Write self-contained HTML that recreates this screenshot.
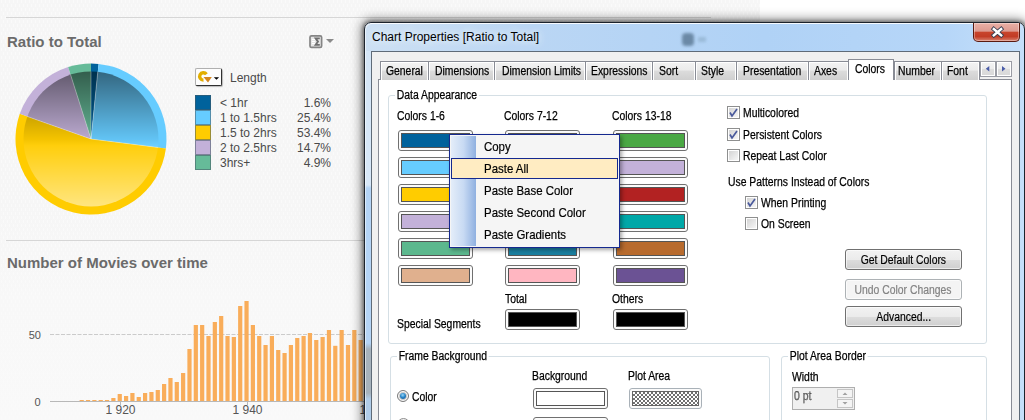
<!DOCTYPE html>
<html><head><meta charset="utf-8">
<style>
*{margin:0;padding:0;box-sizing:border-box}
html,body{width:1025px;height:420px;overflow:hidden;background:#fff;font-family:"Liberation Sans",sans-serif}
.a{position:absolute}
.sheet{left:0;top:0;width:760px;height:420px;background:linear-gradient(#f6f6f6 0,#f6f6f6 200px,#f8f8f8 300px,#f9f9f9 420px)}
.hl{height:1px;background:#d6d6d6}
.ttl{font-weight:bold;font-size:15px;color:#6b6b6b;white-space:nowrap}
.lg{font-size:12px;color:#4a4a4a;white-space:nowrap;line-height:15px}
.sw{width:16px;height:15px;border:1px solid rgba(70,90,100,0.55)}
.d{font-size:11px;letter-spacing:-0.35px;color:#000;white-space:nowrap;line-height:13px}

.cb{position:absolute;width:75px;height:21px;border:1px solid #707070;border-radius:3px;background:#fbfbfb;padding:2px}
.cb i{display:block;width:100%;height:100%;border:1px solid #555}
.tab{position:absolute;top:61px;height:19px;border:1px solid #898c95;border-bottom:none;box-shadow:inset 1px 1px 0 #fff,inset -1px 0 0 #fff;background:linear-gradient(#f3f3f3 0,#ebebeb 45%,#dcdcdc 50%,#cfcfcf 100%)}
.tt{position:absolute;-webkit-text-stroke:0.25px #000;font-size:12px;white-space:nowrap;line-height:14px;color:#000;transform:scaleX(0.865);transform-origin:0 0}
.grp{position:absolute;border:1px solid #d5dfe5;border-radius:3px}
.glab{position:absolute;-webkit-text-stroke:0.25px #000;background:#fff;padding:0 2px;font-size:12px;white-space:nowrap;line-height:14px;transform:scaleX(0.865);transform-origin:0 0}
.chk{position:absolute;width:13px;height:13px;border:1px solid #8e8f8f;background:#fff;padding:1px}.chk:after{content:"";display:block;width:9px;height:9px;background:linear-gradient(135deg,#d4d4d4,#f6f6f6)}
.btn{position:absolute;width:117px;height:21px;border:1px solid #707070;border-radius:3px;background:linear-gradient(#f2f2f2 0,#ebebeb 50%,#dddddd 51%,#cfcfcf 100%);box-shadow:inset 0 0 0 1px rgba(255,255,255,0.6);font-size:12px;text-align:center;line-height:20px;white-space:nowrap}.btn span{display:inline-block;transform:scaleX(0.865);-webkit-text-stroke:0.2px currentColor}
.mi{position:absolute;-webkit-text-stroke:0.2px #000;left:484px;font-size:13px;white-space:nowrap;line-height:15px;color:#000;transform:scaleX(0.88);transform-origin:0 0}
</style></head><body>
<!-- sheet background -->
<div class="a sheet"></div>
<svg class="a" style="left:0;top:0" width="760" height="420"><defs><pattern id="tx" width="4" height="8" patternUnits="userSpaceOnUse"><rect x="1" y="0" width="1" height="3" fill="#fafafa"/><rect x="3" y="4" width="1" height="3" fill="#fafafa"/></pattern></defs><rect width="760" height="420" fill="url(#tx)"/></svg>
<div class="a hl" style="left:6px;top:17px;width:705px"></div>
<div class="a hl" style="left:6px;top:240px;width:360px"></div>
<div class="a ttl" style="left:7px;top:33px">Ratio to Total</div>
<div class="a ttl" style="left:7px;top:254px">Number of Movies over time</div>

<svg class="a" style="left:0;top:0" width="200" height="230" viewBox="0 0 200 230"><defs><linearGradient id="pg" x1="0" y1="0" x2="0" y2="1"><stop offset="0" stop-color="#000" stop-opacity="0.5"/><stop offset="0.55" stop-color="#000" stop-opacity="0"/></linearGradient><linearGradient id="pw" x1="0" y1="0" x2="0" y2="1"><stop offset="0.5" stop-color="#fff" stop-opacity="0"/><stop offset="1" stop-color="#fff" stop-opacity="0.5"/></linearGradient></defs><path d="M91,139 L91.00,63.50 A75.5,75.5 0 0 1 98.58,63.88 Z" fill="#00629c"/><path d="M91,139 L98.58,63.88 A75.5,75.5 0 0 1 165.90,148.46 Z" fill="#66ccff"/><path d="M91,139 L165.90,148.46 A75.5,75.5 0 1 1 19.80,113.87 Z" fill="#ffcc00"/><path d="M91,139 L19.80,113.87 A75.5,75.5 0 0 1 68.12,67.05 Z" fill="#c3b1d9"/><path d="M91,139 L68.12,67.05 A75.5,75.5 0 0 1 91.00,63.50 Z" fill="#66bb99"/><circle cx="91" cy="139" r="67.5" fill="url(#pg)"/><circle cx="91" cy="139" r="67.5" fill="url(#pw)"/><g stroke="#fff" stroke-opacity="0.45" stroke-width="0.7"><line x1="91" y1="139" x2="91.00" y2="71.50"/><line x1="91" y1="139" x2="97.77" y2="71.84"/><line x1="91" y1="139" x2="157.97" y2="147.46"/><line x1="91" y1="139" x2="27.35" y2="116.53"/><line x1="91" y1="139" x2="70.55" y2="74.67"/></g></svg>
<!-- sigma icon -->
<svg class="a" style="left:305px;top:32px" width="32" height="18" viewBox="0 0 32 18">
<rect x="5" y="3.8" width="11.6" height="11.6" rx="1.5" fill="#e6e6e6" stroke="#858585" stroke-width="1.7"/>
<path d="M7,7.5 H10 M7,9.5 H10 M7,11.5 H10" stroke="#fff" stroke-width="1"/>
<path d="M14.8,6.3 H10.6 L13,9.6 L10.6,12.9 H14.8" fill="none" stroke="#6e6e6e" stroke-width="1.8"/>
<path d="M21,7 L29,7 L25,11 Z" fill="#8a8a8a"/>
</svg>
<!-- cycle button -->
<div class="a" style="left:195px;top:68px;width:27px;height:18px;background:#fdfdfd;border:1px solid #b0b0b0;border-right-color:#303030;border-bottom-color:#303030;border-radius:2px;box-shadow:1px 1px 1px rgba(0,0,0,0.25)"></div>
<svg class="a" style="left:196px;top:69px" width="25" height="16" viewBox="0 0 25 16">
<path d="M7.5,11.1 A3.7,3.7 0 1 1 10.4,5.3" fill="none" stroke="#e2ae00" stroke-width="3.4"/>
<path d="M7.5,8 L15.8,8 L12,13.6 Z" fill="#d4861e"/>
<path d="M17.8,8.3 L23.1,8.3 L20.5,10.8 Z" fill="#000"/>
</svg>
<div class="a lg" style="left:230px;top:71px">Length</div>
<div class="a sw" style="left:195px;top:95px;background:#00629c"></div>
<div class="a sw" style="left:195px;top:110px;background:#66ccff"></div>
<div class="a sw" style="left:195px;top:125px;background:#ffcc00"></div>
<div class="a sw" style="left:195px;top:140px;background:#c3b1d9"></div>
<div class="a sw" style="left:195px;top:155px;background:#66bb99"></div>
<div class="a lg" style="left:220px;top:96px">&lt; 1hr</div>
<div class="a lg" style="left:220px;top:111px">1 to 1.5hrs</div>
<div class="a lg" style="left:220px;top:126px">1.5 to 2hrs</div>
<div class="a lg" style="left:220px;top:141px">2 to 2.5hrs</div>
<div class="a lg" style="left:220px;top:156px">3hrs+</div>
<div class="a lg" style="left:280px;top:96px;width:51px;text-align:right">1.6%</div>
<div class="a lg" style="left:280px;top:111px;width:51px;text-align:right">25.4%</div>
<div class="a lg" style="left:280px;top:126px;width:51px;text-align:right">53.4%</div>
<div class="a lg" style="left:280px;top:141px;width:51px;text-align:right">14.7%</div>
<div class="a lg" style="left:280px;top:156px;width:51px;text-align:right">4.9%</div>
<!-- bar chart -->
<svg class="a" style="left:0;top:280px" width="366" height="140" viewBox="0 280 366 140"><line x1="50" y1="334.5" x2="366" y2="334.5" stroke="#cbcbcb" stroke-width="1" stroke-dasharray="4,1.5"/><g fill="#f9ad5a"><rect x="79.60" y="400" width="4.2" height="1.0"/><rect x="85.94" y="400" width="4.2" height="1.0"/><rect x="92.28" y="400" width="4.2" height="1.0"/><rect x="98.62" y="400" width="4.2" height="1.0"/><rect x="104.96" y="400" width="4.2" height="1.0"/><rect x="111.30" y="398" width="4.2" height="3.0"/><rect x="117.64" y="394" width="4.2" height="7.0"/><rect x="123.98" y="396" width="4.2" height="5.0"/><rect x="130.32" y="393" width="4.2" height="8.0"/><rect x="136.66" y="397" width="4.2" height="4.0"/><rect x="143.00" y="393" width="4.2" height="8.0"/><rect x="149.34" y="392" width="4.2" height="9.0"/><rect x="155.68" y="390" width="4.2" height="11.0"/><rect x="162.02" y="384" width="4.2" height="17.0"/><rect x="168.36" y="378" width="4.2" height="23.0"/><rect x="174.70" y="382" width="4.2" height="19.0"/><rect x="181.04" y="373" width="4.2" height="28.0"/><rect x="187.38" y="349" width="4.2" height="52.0"/><rect x="193.72" y="325" width="4.2" height="76.0"/><rect x="200.06" y="325" width="4.2" height="76.0"/><rect x="206.40" y="336" width="4.2" height="65.0"/><rect x="212.74" y="322" width="4.2" height="79.0"/><rect x="219.08" y="316" width="4.2" height="85.0"/><rect x="225.42" y="336" width="4.2" height="65.0"/><rect x="231.76" y="337" width="4.2" height="64.0"/><rect x="238.10" y="306" width="4.2" height="95.0"/><rect x="244.44" y="301" width="4.2" height="100.0"/><rect x="250.78" y="325" width="4.2" height="76.0"/><rect x="257.12" y="336" width="4.2" height="65.0"/><rect x="263.46" y="345" width="4.2" height="56.0"/><rect x="269.80" y="336" width="4.2" height="65.0"/><rect x="276.14" y="350" width="4.2" height="51.0"/><rect x="282.48" y="353" width="4.2" height="48.0"/><rect x="288.82" y="345" width="4.2" height="56.0"/><rect x="295.16" y="338" width="4.2" height="63.0"/><rect x="301.50" y="336" width="4.2" height="65.0"/><rect x="307.84" y="333" width="4.2" height="68.0"/><rect x="314.18" y="340" width="4.2" height="61.0"/><rect x="320.52" y="337" width="4.2" height="64.0"/><rect x="326.86" y="330" width="4.2" height="71.0"/><rect x="333.20" y="345.8" width="4.2" height="55.2"/><rect x="339.54" y="330" width="4.2" height="71.0"/><rect x="345.88" y="345" width="4.2" height="56.0"/><rect x="352.22" y="330" width="4.2" height="71.0"/><rect x="358.56" y="340" width="4.2" height="61.0"/></g><line x1="50" y1="401.5" x2="366" y2="401.5" stroke="#b8b8b8" stroke-width="1"/><line x1="120.5" y1="401" x2="120.5" y2="405" stroke="#b8b8b8"/><line x1="247.5" y1="401" x2="247.5" y2="405" stroke="#b8b8b8"/></svg>
<div class="a lg" style="left:20px;top:328px;width:20.5px;text-align:right;color:#555;font-size:11px;letter-spacing:-0.3px">50</div>
<div class="a lg" style="left:20px;top:395px;width:20.5px;text-align:right;color:#555;font-size:11px">0</div>
<div class="a lg" style="left:100px;top:403px;width:41px;text-align:center;color:#555">1 920</div>
<div class="a lg" style="left:227px;top:403px;width:41px;text-align:center;color:#555">1 940</div>
<div class="a lg" style="left:354px;top:403px;width:41px;text-align:center;color:#555">1 960</div>

<!-- dialog -->
<div class="a" style="left:364px;top:22px;width:661px;height:460px;border-radius:7px 7px 0 0;box-shadow:0 0 11px 3px rgba(0,0,0,0.42),0 0 4px 1px rgba(0,0,0,0.45)"></div>
<div class="a" style="left:364px;top:22px;width:661px;height:460px;border:1px solid #1c232c;border-radius:7px 7px 0 0;box-shadow:inset 1px 1px 0 rgba(255,255,255,0.6);background:linear-gradient(90deg,#cde0f3 0,#bad6f4 170px,#b0d2f6 400px,#b6d6f8 580px,#c6e0fa 664px)"></div>
<div class="a" style="left:370px;top:23px;width:650px;height:1px;background:rgba(255,255,255,0.7);border-radius:6px 6px 0 0"></div>
<div class="a" style="left:682px;top:33px;width:12px;height:13px;border-radius:4px;background:#5f7d99;filter:blur(1.8px);opacity:0.85"></div><div class="a" style="left:698px;top:37px;width:8px;height:5px;background:#8fb0cc;filter:blur(1.5px);opacity:0.7"></div>
<div class="a" style="left:372px;top:30px;font-size:12px;line-height:14px;white-space:nowrap;color:#000;text-shadow:0 0 6px #e8f2fc,0 0 10px #e8f2fc">Chart Properties [Ratio to Total]</div>
<!-- close button -->
<div class="a" style="left:973px;top:23px;width:47px;height:19px;border:1px solid #5a1a10;border-top:none;border-radius:0 0 5px 5px;background:linear-gradient(#eab0a6 0,#dc9a90 45%,#c8442c 52%,#c23c26 75%,#d88270 100%);box-shadow:inset 0 0 0 1px rgba(255,255,255,0.35)"></div>
<svg class="a" style="left:990px;top:24px" width="15" height="15" viewBox="0 0 15 15"><path d="M3.8,5 L11.2,11.3 M11.2,5 L3.8,11.3" stroke="#3a3f52" stroke-width="4.2" stroke-linecap="square"/><path d="M3.8,5 L11.2,11.3 M11.2,5 L3.8,11.3" stroke="#fff" stroke-width="2.4" stroke-linecap="square"/></svg>
<div class="a" style="left:365px;top:51px;width:6px;height:369px;border-left:1px solid rgba(255,255,255,0.55);background:linear-gradient(#d4e5f6 0,#d8e8f8 134px,#b4d4f6 137px,#b4d4f6 292px,#a6b2bc 298px,#a6b2bc 342px,#b0cce8 348px)"></div>
<!-- client -->
<div class="a" style="left:371px;top:51px;width:649px;height:380px;border:1px solid #5f6b78;background:#f0f0f0"></div>
<!-- tab page -->
<div class="a" style="left:378px;top:79px;width:634px;height:360px;border:1px solid #898c95;background:#fff"></div>
<div class="tab" style="left:380px;width:49px"></div>
<div class="tab" style="left:428px;width:67px"></div>
<div class="tab" style="left:494px;width:92px"></div>
<div class="tab" style="left:585px;width:68px"></div>
<div class="tab" style="left:652px;width:44px"></div>
<div class="tab" style="left:695px;width:42px"></div>
<div class="tab" style="left:736px;width:73px"></div>
<div class="tab" style="left:808px;width:41px"></div>
<div class="tab" style="left:894px;width:48px"></div>
<div class="tab" style="left:941px;width:39px"></div>
<div class="tt" style="left:386px;top:64px">General</div>
<div class="tt" style="left:435px;top:64px">Dimensions</div>
<div class="tt" style="left:502px;top:64px">Dimension Limits</div>
<div class="tt" style="left:591px;top:64px">Expressions</div>
<div class="tt" style="left:659px;top:64px">Sort</div>
<div class="tt" style="left:701px;top:64px">Style</div>
<div class="tt" style="left:743px;top:64px">Presentation</div>
<div class="tt" style="left:814px;top:64px">Axes</div>
<div class="tt" style="left:898px;top:64px">Number</div>
<div class="tt" style="left:947px;top:64px">Font</div>

<div class="a" style="left:848px;top:59px;width:46px;height:21px;border:1px solid #898c95;border-bottom:none;background:#fff"></div>
<div class="tt" style="left:855px;top:62px">Colors</div>
<div class="a" style="left:980px;top:61px;width:16px;height:16px;border:1px solid #9a9ca4;background:linear-gradient(#f4f4f4 0,#ececec 50%,#dedede 51%,#d8d8d8 100%);box-shadow:inset 0 0 0 1px #fff"></div>
<div class="a" style="left:996px;top:61px;width:16px;height:16px;border:1px solid #9a9ca4;background:linear-gradient(#f4f4f4 0,#ececec 50%,#dedede 51%,#d8d8d8 100%);box-shadow:inset 0 0 0 1px #fff"></div>
<svg class="a" style="left:980px;top:61px" width="32" height="16"><path d="M9.3,5 L9.3,10.5 L5.8,7.75 Z M22,5 L22,10.5 L25.5,7.75 Z" fill="#4a5ca8"/></svg>

<!-- group data appearance -->
<div class="grp" style="left:388px;top:95px;width:599px;height:249px"></div>
<div class="glab" style="left:395px;top:88px">Data Appearance</div>
<div class="tt" style="left:397px;top:109px">Colors 1-6</div>
<div class="tt" style="left:504px;top:109px">Colors 7-12</div>
<div class="tt" style="left:612px;top:109px">Colors 13-18</div>
<div class="cb" style="left:398px;top:130px"><i style="background:#00629c"></i></div>
<div class="cb" style="left:398px;top:157px"><i style="background:#66ccff"></i></div>
<div class="cb" style="left:398px;top:184px"><i style="background:#ffcc00"></i></div>
<div class="cb" style="left:398px;top:211px"><i style="background:#c3b1d9"></i></div>
<div class="cb" style="left:398px;top:238px"><i style="background:#5cb88e"></i></div>
<div class="cb" style="left:398px;top:265px"><i style="background:#e0b08e"></i></div>
<div class="cb" style="left:505px;top:130px"><i style="background:#00629c"></i></div>
<div class="cb" style="left:505px;top:157px"><i style="background:#66ccff"></i></div>
<div class="cb" style="left:505px;top:184px"><i style="background:#ffcc00"></i></div>
<div class="cb" style="left:505px;top:211px"><i style="background:#c3b1d9"></i></div>
<div class="cb" style="left:505px;top:238px"><i style="background:#1a7fa0"></i></div>
<div class="cb" style="left:505px;top:265px"><i style="background:#ffb6c1"></i></div>
<div class="cb" style="left:613px;top:130px"><i style="background:#4aa844"></i></div>
<div class="cb" style="left:613px;top:157px"><i style="background:#c3b1d9"></i></div>
<div class="cb" style="left:613px;top:184px"><i style="background:#b22222"></i></div>
<div class="cb" style="left:613px;top:211px"><i style="background:#00a8a8"></i></div>
<div class="cb" style="left:613px;top:238px"><i style="background:#b86b2e"></i></div>
<div class="cb" style="left:613px;top:265px"><i style="background:#6b5294"></i></div>

<div class="tt" style="left:505px;top:292px">Total</div>
<div class="tt" style="left:612px;top:292px">Others</div>
<div class="tt" style="left:397px;top:317px">Special Segments</div>
<div class="cb" style="left:505px;top:309px"><i style="background:#000"></i></div>
<div class="cb" style="left:613px;top:309px"><i style="background:#000"></i></div>

<div class="chk" style="left:727px;top:106px"></div>
<div class="tt" style="left:743px;top:106px">Multicolored</div>
<div class="chk" style="left:727px;top:128px"></div>
<div class="tt" style="left:743px;top:128px">Persistent Colors</div>
<div class="chk" style="left:727px;top:149px"></div>
<div class="tt" style="left:743px;top:149px">Repeat Last Color</div>
<div class="tt" style="left:728px;top:175px">Use Patterns Instead of Colors</div>
<div class="chk" style="left:745px;top:196px"></div>
<div class="tt" style="left:761px;top:196px">When Printing</div>
<div class="chk" style="left:745px;top:217px"></div>
<div class="tt" style="left:761px;top:217px">On Screen</div>
<svg class="a" style="left:727px;top:106px" width="35" height="112">
<path d="M3,6.5 L5,10 L10,3" fill="none" stroke="#4a5a9c" stroke-width="1.7"/>
<path d="M3,28.5 L5,32 L10,25" fill="none" stroke="#4a5a9c" stroke-width="1.7"/>
<path d="M21,96.5 L23,100 L28,93" fill="none" stroke="#4a5a9c" stroke-width="1.7"/>
</svg>
<div class="btn" style="left:845px;top:249px"><span>Get Default Colors</span></div>
<div class="btn" style="left:845px;top:279px;border-color:#adb2b5;background:#f4f4f4;color:#838383"><span>Undo Color Changes</span></div>
<div class="btn" style="left:845px;top:306px"><span>Advanced...</span></div>

<!-- frame background -->
<div class="grp" style="left:390px;top:356px;width:380px;height:100px"></div>
<div class="glab" style="left:397px;top:349px">Frame Background</div>
<div class="tt" style="left:532px;top:369px">Background</div>
<div class="tt" style="left:628px;top:369px">Plot Area</div>
<div class="cb" style="left:533px;top:388px"><i style="background:#fff"></i></div>
<div class="cb" style="left:629px;top:388px;width:73px;border-color:#a9b1b8"><i style="border-color:#666;background:repeating-conic-gradient(#707070 0 25%,#fff 0 50%) 0 0/4px 4px"></i></div>
<div class="cb" style="left:533px;top:417px"><i style="background:#fff"></i></div>
<div class="a" style="left:397px;top:390px;width:12px;height:12px;border-radius:50%;border:1px solid #7a7a7a;background:#f4f4f4;box-shadow:inset 0 0 0 1px #fff,inset 0 0 0 2px #c8c8c8"></div>
<div class="a" style="left:400px;top:393px;width:6px;height:6px;border-radius:50%;background:radial-gradient(circle at 45% 35%,#9ad8fa 0,#2a86c8 45%,#0d4d8a 100%)"></div>
<div class="tt" style="left:412px;top:390px">Color</div>
<div class="a" style="left:397px;top:418px;width:13px;height:13px;border-radius:50%;border:1px solid #8f8f8f;background:#f0f0f0"></div>

<!-- plot area border -->
<div class="grp" style="left:781px;top:356px;width:206px;height:100px"></div>
<div class="glab" style="left:788px;top:349px">Plot Area Border</div>
<div class="tt" style="left:792px;top:370px">Width</div>
<div class="a" style="left:792px;top:387px;width:63px;height:23px;border:1px solid #afafaf;background:#f0f0f0"></div>
<div class="tt" style="left:794px;top:389px;color:#8a8a8a">0 pt</div>
<div class="a" style="left:837px;top:389px;width:16px;height:9px;border:1px solid #c5c5c5;background:#f4f4f4"></div>
<div class="a" style="left:837px;top:399px;width:16px;height:9px;border:1px solid #c5c5c5;background:#f4f4f4"></div>
<svg class="a" style="left:837px;top:389px" width="16" height="20"><path d="M5.5,6 L8,3.5 L10.5,6 Z M5.5,13 L8,15.5 L10.5,13 Z" fill="#a0a0a0"/></svg>

<!-- context menu -->
<div class="a" style="left:449px;top:134px;width:171px;height:114px;box-shadow:2px 2px 4px rgba(0,0,0,0.35)"></div>
<div class="a" style="left:449px;top:134px;width:171px;height:114px;border:1px solid #15298f;background:#f5f5f5"></div>
<div class="a" style="left:451px;top:136px;width:25px;height:110px;background:linear-gradient(90deg,#e4edf9,#c8daf3 50%,#8fb0e0)"></div>
<div class="a" style="left:451px;top:158px;width:167px;height:21px;border:1px solid #15298f;background:#ffecc2"></div>
<div class="mi" style="top:139px">Copy</div>
<div class="mi" style="top:161px">Paste All</div>
<div class="mi" style="top:183px">Paste Base Color</div>
<div class="mi" style="top:205px">Paste Second Color</div>
<div class="mi" style="top:227px">Paste Gradients</div>

</body></html>
